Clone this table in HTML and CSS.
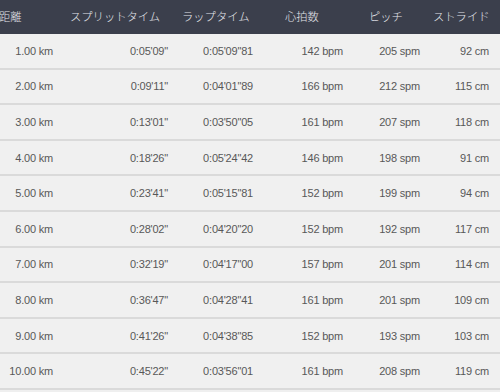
FILE: index.html
```html
<!DOCTYPE html>
<html lang="ja">
<head>
<meta charset="utf-8">
<link rel="stylesheet" href="styles.css">
</head>
<body>
<div class="table">
  <div class="head">
    <div>距離</div><div>スプリットタイム</div><div>ラップタイム</div><div>心拍数</div><div>ピッチ</div><div>ストライド</div>
  </div>
  <div class="row"><div>1.00 km</div><div>0:05'09"</div><div>0:05'09"81</div><div>142 bpm</div><div>205 spm</div><div>92 cm</div></div>
  <div class="row"><div>2.00 km</div><div>0:09'11"</div><div>0:04'01"89</div><div>166 bpm</div><div>212 spm</div><div>115 cm</div></div>
  <div class="row"><div>3.00 km</div><div>0:13'01"</div><div>0:03'50"05</div><div>161 bpm</div><div>207 spm</div><div>118 cm</div></div>
  <div class="row"><div>4.00 km</div><div>0:18'26"</div><div>0:05'24"42</div><div>146 bpm</div><div>198 spm</div><div>91 cm</div></div>
  <div class="row"><div>5.00 km</div><div>0:23'41"</div><div>0:05'15"81</div><div>152 bpm</div><div>199 spm</div><div>94 cm</div></div>
  <div class="row"><div>6.00 km</div><div>0:28'02"</div><div>0:04'20"20</div><div>152 bpm</div><div>192 spm</div><div>117 cm</div></div>
  <div class="row"><div>7.00 km</div><div>0:32'19"</div><div>0:04'17"00</div><div>157 bpm</div><div>201 spm</div><div>114 cm</div></div>
  <div class="row"><div>8.00 km</div><div>0:36'47"</div><div>0:04'28"41</div><div>161 bpm</div><div>201 spm</div><div>109 cm</div></div>
  <div class="row"><div>9.00 km</div><div>0:41'26"</div><div>0:04'38"85</div><div>152 bpm</div><div>193 spm</div><div>103 cm</div></div>
  <div class="row"><div>10.00 km</div><div>0:45'22"</div><div>0:03'56"01</div><div>161 bpm</div><div>208 spm</div><div>119 cm</div></div>
</div>
</body>
</html>
```
FILE: styles.css
```css
html, body {
  margin: 0;
  padding: 0;
  background: #efefef;
  overflow: hidden;
}
.table {
  width: 500px;
}
.head {
  display: grid;
  grid-template-columns: 71px 112px 103px 84px 64px 1fr;
  height: 34px;
  align-items: center;
  background: #3b3f4c;
  color: #e2e4ea;
  font-family: "Noto Sans CJK JP", "Noto Sans", sans-serif;
  font-size: 11.3px;
  font-weight: 300;
  margin-left: -1px;
}
.head > div {
  white-space: nowrap;
  line-height: 1;
  padding-bottom: 1px;
}
.row {
  display: grid;
  grid-template-columns: 53px 115px 85px 90px 77px 69px;
  box-sizing: border-box;
  height: 35.6px;
  align-items: center;
  background: #f0f0f0;
  border-bottom: 2px solid #dadada;
  color: #585858;
  font-family: "Liberation Sans", Arial, sans-serif;
  font-size: 11px;
}
.row > div {
  text-align: right;
  white-space: nowrap;
  letter-spacing: -0.2px;
}
```
